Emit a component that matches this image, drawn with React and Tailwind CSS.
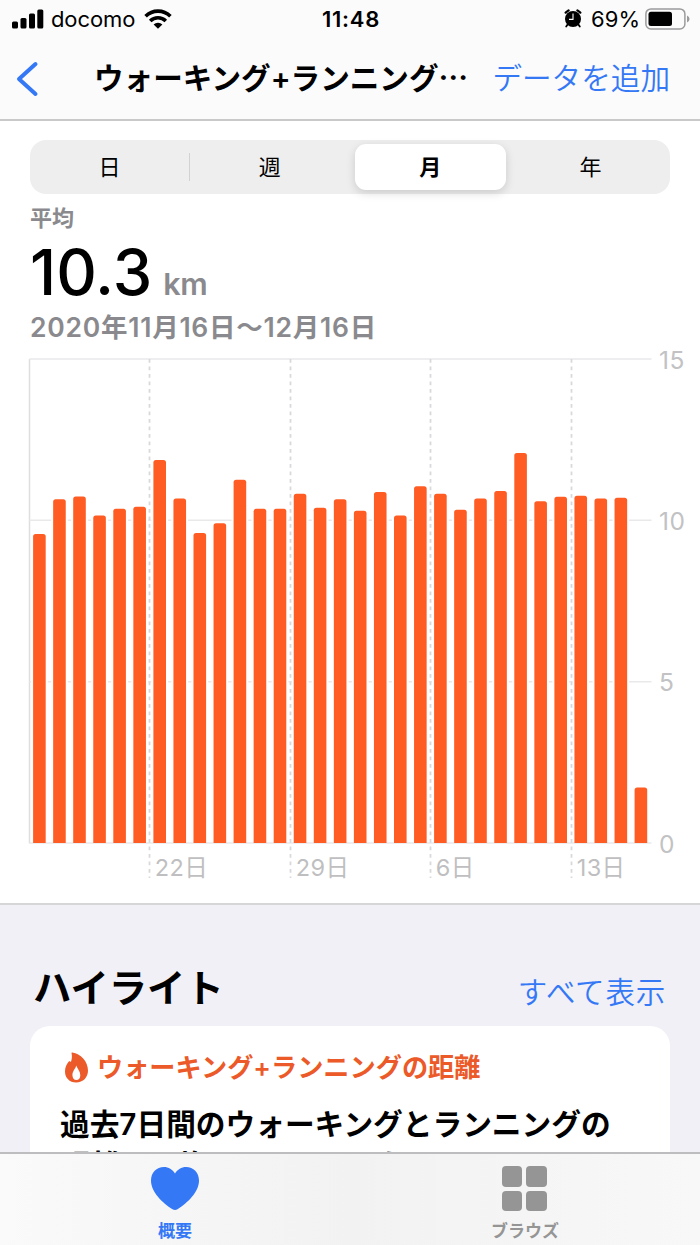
import React, { useState } from "react";

const PERIODS = ["日", "週", "月", "年"];

const DISTANCES = [
  9.58, 10.65, 10.74, 10.15, 10.36, 10.42, 11.87, 10.68, 9.61, 9.91, 11.26,
  10.36, 10.36, 10.82, 10.39, 10.65, 10.3, 10.88, 10.15, 11.06, 10.82, 10.33,
  10.68, 10.91, 12.09, 10.59, 10.73, 10.76, 10.68, 10.7, 1.72,
];

const WEEKS = [
  { x: 149.5, label: "22日" },
  { x: 290.5, label: "29日" },
  { x: 430.5, label: "6日" },
  { x: 571.5, label: "13日" },
];

const StatusBar = () => (
  <div className="flex h-[38px] items-center justify-between pl-3 pr-[10px] text-[22px] leading-none">
    <div className="flex w-[260px] items-center">
      <svg width="32" height="20" viewBox="0 0 32 20">
        <rect x="0" y="12.5" width="6" height="7" rx="1.5" />
        <rect x="8.5" y="9" width="6" height="10.5" rx="1.5" />
        <rect x="17" y="4.5" width="6" height="15" rx="1.5" />
        <rect x="25.3" y="0.5" width="6" height="19" rx="1.5" />
      </svg>
      <span className="ml-[7px] w-[86px] tracking-[-0.1px]">docomo</span>
      <svg className="ml-[7px]" width="28" height="20" viewBox="0 0 28 20">
        <g fill="none" stroke="#000" strokeWidth="3.6">
          <path d="M1.6 7.2 A17.6 17.6 0 0 1 26.4 7.2" />
          <path d="M6.2 12 A11 11 0 0 1 21.8 12" />
        </g>
        <path d="M14 19.8 L9.6 15.5 A6.2 6.2 0 0 1 18.4 15.5 Z" />
      </svg>
    </div>
    <span className="font-semibold tracking-[0.7px]">11:48</span>
    <div className="flex w-[260px] items-center justify-end">
      <svg className="-mt-[2px]" width="18" height="19" viewBox="0 0 18 19">
        <circle cx="9" cy="10" r="8" />
        <path
          d="M1.6 3.6 L4.6 1.4 M16.4 3.6 L13.4 1.4"
          stroke="#000"
          strokeWidth="2.2"
          strokeLinecap="round"
        />
        <path
          d="M3.6 15.5 L2.2 17.6 M14.4 15.5 L15.8 17.6"
          stroke="#000"
          strokeWidth="1.8"
          strokeLinecap="round"
        />
        <path d="M9 4.6 V10.4 H5" fill="none" stroke="#fff" strokeWidth="1.1" />
      </svg>
      <span className="ml-[9px]">69%</span>
      <svg className="ml-[5px]" width="45" height="22" viewBox="0 0 45 22">
        <rect
          x="0.9"
          y="0.9"
          width="39"
          height="20"
          rx="5"
          fill="none"
          stroke="#9b9b9c"
          strokeWidth="1.5"
        />
        <rect x="3.5" y="3.7" width="23.5" height="14.3" rx="2.5" />
        <path d="M42 7.5 Q44.6 8.8 44.6 11 Q44.6 13.2 42 14.5 Z" fill="#9b9b9c" />
      </svg>
    </div>
  </div>
);

const NavBar = () => (
  <div className="flex h-[81px] items-center pl-4 pr-[30px] text-[29.6px] leading-none">
    <svg width="24" height="38" viewBox="0 0 24 38">
      <path
        d="M19.5 4 L3 19 L19.5 34"
        fill="none"
        stroke="#3478f6"
        strokeWidth="4"
        strokeLinecap="round"
        strokeLinejoin="round"
      />
    </svg>
    <h1 className="ml-[54px] whitespace-nowrap font-semibold">
      ウォーキング+ランニング⋯
    </h1>
    <button className="ml-auto whitespace-nowrap font-[350] text-[#3478f6]">
      データを追加
    </button>
  </div>
);

const PeriodPicker = () => {
  const [active, setActive] = useState("月");

  return (
    <div className="mx-[30px] flex h-[54px] items-center rounded-2xl bg-[#eeeeee] px-1 text-[22px] leading-none">
      {PERIODS.map((period, i) => (
        <React.Fragment key={period}>
          {i > 0 && (
            <span
              className={
                i === 1
                  ? "mx-1 h-7 w-[1.5px] bg-[#d2d2d4]"
                  : "mx-1 h-7 w-[1.5px]"
              }
            />
          )}
          <button
            onClick={() => setActive(period)}
            className={
              active === period
                ? "h-[46px] flex-1 rounded-[11px] bg-white font-semibold shadow-[0_3px_10px_rgba(0,0,0,0.15)]"
                : "h-[46px] flex-1"
            }
          >
            {period}
          </button>
        </React.Fragment>
      ))}
    </div>
  );
};

const Summary = () => (
  <div className="px-[30px] font-semibold text-[#8a8a8e]">
    <p className="mt-[11px] text-[22px] leading-[26px]">平均</p>
    <p className="flex h-[76px] items-baseline leading-[82px]">
      <span className="text-[63px] font-medium text-black">10.3</span>
      <span className="ml-[11px] text-[30.5px] tracking-[-0.3px]">km</span>
    </p>
    <p className="mt-1 text-[26.5px] leading-[32px] tracking-[0.75px]">
      2020年11月16日〜12月16日
    </p>
  </div>
);

const DistanceChart = () => {
  const bottom = 500;
  const unit = 484 / 15;

  return (
    <svg width="700" height="547" viewBox="0 0 700 547" className="block">
      {/* grid */}
      <g stroke="#e9e9eb" strokeWidth="1.5">
        <path d="M29.5 16 V500.5" stroke="#dedee0" />
        {[0, 5, 10, 15].map((km) => (
          <line
            key={km}
            x1="29.5"
            x2="651.5"
            y1={bottom - km * unit}
            y2={bottom - km * unit}
          />
        ))}
      </g>
      <g fill="#c2c2c4" fontSize="24.5" fontWeight="400" letterSpacing="0.5">
        {[0, 5, 10, 15].map((km) => (
          <text key={km} x="659" y={bottom - km * unit + 9.5}>
            {km}
          </text>
        ))}
      </g>

      {/* bars */}
      {DISTANCES.map((km, i) => {
        const x = 33.1 + i * 20.05;
        const top = bottom - km * unit;
        return (
          <g key={i}>
            <rect x={x - 2} y={top - 2} width="16.6" height={bottom - top + 1} fill="#fff" />
            <path
              d={`M${x} ${bottom} V${top + 2.5} q0 -2.5 2.5 -2.5 h7.6 q2.5 0 2.5 2.5 V${bottom} Z`}
              fill="#ff5c24"
            />
          </g>
        );
      })}

      {WEEKS.map(({ x, label }) => (
        <g key={label}>
          <line
            x1={x}
            x2={x}
            y1="16"
            y2="535"
            stroke="#d9d9db"
            strokeWidth="1.8"
            strokeDasharray="3.7 3.8"
          />
          <text
            x={x + 5.2}
            y="532.5"
            fill="#bfbfc1"
            fontSize="23.5"
            fontWeight="400"
            letterSpacing="0.4"
          >
            {label}
          </text>
        </g>
      ))}
    </svg>
  );
};

const Highlights = () => (
  <section className="min-h-0 flex-1 overflow-hidden border-t-2 border-[#d6d6d9] bg-[#f1f0f6] px-[30px]">
    <div className="flex h-[121px] items-end justify-between pb-[15px] pl-[3px] pr-1">
      <h2 className="pb-[1px] text-[38.3px] font-bold leading-[44px]">ハイライト</h2>
      <button className="text-[29.5px] font-[350] leading-[38px] tracking-[0.8px] text-[#3478f6]">
        すべて表示
      </button>
    </div>
    <div className="h-[300px] rounded-[20px] bg-white px-[30px] pt-[23px]">
      <div className="flex items-center whitespace-nowrap text-[26.2px] font-semibold leading-[38px] text-[#eb5a28]">
        <svg className="-mt-[2px] ml-1 mr-2" width="25" height="31" viewBox="0 0 25 31">
          <path
            d="M8.4 0.4 C16.5 1.8 24 9 24 18.5 C24 25.5 19 30.5 12.2 30.5 C5.4 30.5 1 25.8 1 19.5 C1 15.5 2.6 12.2 4.6 9.8 C5.4 9 6.3 9.2 6.9 10 C7.9 7.5 8.2 4 7.6 1.5 C7.4 0.7 7.7 0.3 8.4 0.4 Z M12.2 13.5 C11.8 16.5 8.4 18.8 8.4 23 C8.4 26 10 28 12.4 28 C14.8 28 16.3 26 16.3 23.2 C16.3 19.5 13.6 17 12.2 13.5 Z"
            fill="currentColor"
            fillRule="evenodd"
          />
        </svg>
        ウォーキング+ランニングの距離
      </div>
      <p className="mt-[17px] whitespace-nowrap text-[29.7px] font-semibold leading-[41px]">
        過去7日間のウォーキングとランニングの
        <br />
        距離は平均10.3 kmでした。
      </p>
    </div>
  </section>
);

const TabBar = () => (
  <nav className="flex h-[93px] shrink-0 border-t-2 border-[#bdbdbf] bg-linear-to-r from-[#fafafa] via-[#f2f2f2] to-[#f8f8f8] text-[17px] font-semibold leading-none">
    <button className="flex flex-1 flex-col items-center pt-[13px] text-[#3478f6]">
      <svg width="48" height="43" viewBox="0 0 48 43">
        <path
          d="M24 6.5 C21.5 2.5 17.5 0 13 0 C5.5 0 0 5.7 0 13.5 C0 25 11.5 36 21.5 42.2 Q24 43.6 26.5 42.2 C36.5 36 48 25 48 13.5 C48 5.7 42.5 0 35 0 C30.5 0 26.5 2.5 24 6.5 Z"
          fill="currentColor"
        />
      </svg>
      <span className="mt-[13px]">概要</span>
    </button>
    <button className="flex flex-1 flex-col items-center pt-3 text-[#959595]">
      <span className="mr-[2px] grid grid-cols-2 gap-1">
        {[0, 1, 2, 3].map((n) => (
          <span key={n} className="size-[20.5px] rounded-[4px] bg-[#959595]" />
        ))}
      </span>
      <span className="mt-3">ブラウズ</span>
    </button>
  </nav>
);

const App = () => (
  <div className="flex h-[1245px] w-[700px] flex-col overflow-hidden bg-white font-[Inter,'Noto_Sans_CJK_JP',sans-serif] text-black">
    <header className="border-b-2 border-[#c9c9cb] bg-[#fbfbfc]">
      <StatusBar />
      <NavBar />
    </header>
    <main className="flex min-h-0 flex-1 flex-col">
      <div className="h-[782px] shrink-0 pt-[19px]">
        <PeriodPicker />
        <Summary />
        <DistanceChart />
      </div>
      <Highlights />
    </main>
    <TabBar />
  </div>
);

export default App;
